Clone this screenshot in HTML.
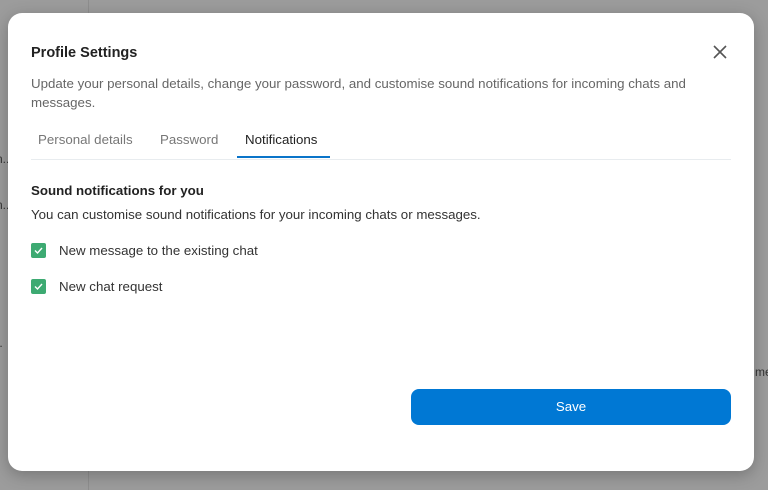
<!DOCTYPE html>
<html><head><style>
body{margin:0;width:768px;height:490px;background:#9c9c9c;font-family:"Liberation Sans",sans-serif;position:relative;overflow:hidden}
.vl{position:absolute;left:88px;top:0;width:1px;height:490px;background:#8e8e8e}
.bg{position:absolute;font-size:12px;color:#333}
.m{position:absolute;left:8px;top:13px;width:746px;height:458px;background:#fff;border-radius:14px;box-shadow:0 4px 16px rgba(0,0,0,.25)}
.a{position:absolute;white-space:nowrap;font-size:13.3px}
.cb{position:absolute;left:23px;width:15px;height:15px;background:#3daa72;border-radius:2px}
</style></head><body>
<div class="vl"></div>
<div class="bg" style="left:-4px;top:152px">n..</div>
<div class="bg" style="left:-4px;top:198px">n..</div>
<div class="bg" style="left:-4px;top:336px">..</div>
<div class="bg" style="left:755px;top:365px">me</div>
<div class="m">
<div class="a" style="left:23px;top:32px;font-size:14.5px;font-weight:bold;color:#222">Profile Settings</div>
<svg class="a" style="left:704px;top:31px" width="16" height="16" viewBox="0 0 16 16"><path d="M2 2L14 14M14 2L2 14" stroke="#555" stroke-width="1.6"/></svg>
<div class="a" style="left:23px;top:61px;color:#666;line-height:19px;white-space:normal;width:700px">Update your personal details, change your password, and customise sound notifications for incoming chats and messages.</div>
<div class="a" style="left:30px;top:119px;color:#777">Personal details</div>
<div class="a" style="left:152px;top:119px;color:#777">Password</div>
<div class="a" style="left:237px;top:119px;color:#222">Notifications</div>
<div class="a" style="left:23px;top:146px;width:700px;height:1px;background:#e8ecef"></div>
<div class="a" style="left:229px;top:143px;width:93px;height:2px;background:#0a74c9"></div>
<div class="a" style="left:23px;top:170px;font-weight:bold;color:#222">Sound notifications for you</div>
<div class="a" style="left:23px;top:194px;color:#333">You can customise sound notifications for your incoming chats or messages.</div>
<div class="cb" style="top:230px"><svg width="15" height="15"><path d="M4 7.5L6.5 10L11 5" stroke="#fff" stroke-width="1.4" fill="none"/></svg></div>
<div class="a" style="left:51px;top:230px;color:#333">New message to the existing chat</div>
<div class="cb" style="top:266px"><svg width="15" height="15"><path d="M4 7.5L6.5 10L11 5" stroke="#fff" stroke-width="1.4" fill="none"/></svg></div>
<div class="a" style="left:51px;top:266px;color:#333">New chat request</div>
<div class="a" style="left:403px;top:376px;width:320px;height:36px;background:#0078d4;border-radius:8px;color:#fff;text-align:center;line-height:36px">Save</div>
</div>
</body></html>
